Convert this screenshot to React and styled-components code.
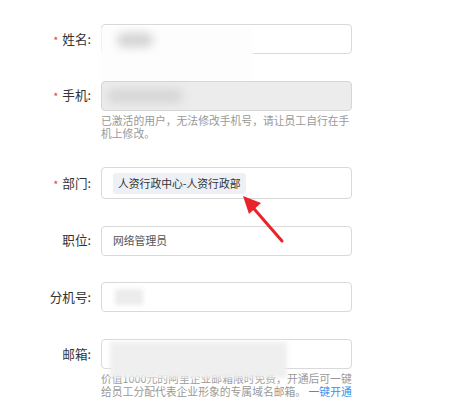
import React from "react";
import styled, { createGlobalStyle } from "styled-components";

const Global = createGlobalStyle`
  html, body { margin: 0; padding: 0; background: #fff; }
  body { font-family: "Noto Sans CJK SC", "Microsoft YaHei", sans-serif; }
`;

const Page = styled.div`
  position: relative;
  width: 472px;
  height: 412px;
  overflow: hidden;
  padding-top: 24px;
  box-sizing: border-box;
  display: flex;
  flex-direction: column;
  gap: 26.6px;
`;

const Row = styled.div`
  display: grid;
  grid-template-columns: 91px 251px;
  column-gap: 10px;
  align-items: start;
`;

const Label = styled.div`
  height: ${(p) => p.$h || 30}px;
  display: flex;
  align-items: center;
  justify-content: flex-end;
  font-size: 12.6px;
  color: #333;
  line-height: 1;
  white-space: nowrap;
`;

const Star = styled.span`
  color: #f04134;
  font-size: 11px;
  margin-right: 4px;
  position: relative;
  top: 1px;
`;

const Field = styled.div`
  position: relative;
  display: flex;
  flex-direction: column;
`;

const Box = styled.div`
  box-sizing: border-box;
  height: ${(p) => p.$h || 30}px;
  border: 1px solid ${(p) => (p.$disabled ? "#d6d6d6" : "#d9d9d9")};
  border-radius: 4px;
  background: ${(p) => (p.$disabled ? "#ececec" : "#fff")};
  display: flex;
  align-items: center;
  padding: 0 11px;
  font-size: 10.8px;
  color: #555;
  line-height: 1;
`;

const Tag = styled.span`
  display: inline-flex;
  align-items: center;
  height: 21px;
  padding: 0 5px;
  border-radius: 3px;
  background: #edf0f5;
  color: #333;
  font-size: 10.8px;
  line-height: 1;
`;

const Hint = styled.div`
  margin-top: 3px;
  font-size: 10.8px;
  line-height: 13.5px;
  color: #999;
`;

const Link = styled.span`
  color: #3d8fe8;
`;

const Mask = styled.div`
  position: absolute;
  left: ${(p) => p.$x}px;
  top: ${(p) => p.$y}px;
  width: ${(p) => p.$w}px;
  height: ${(p) => p.$hh}px;
  background: ${(p) => p.$bg};
  filter: blur(${(p) => p.$blur || 0}px);
  border-radius: ${(p) => p.$r || 0}px;
`;

const ArrowSvg = styled.svg`
  position: absolute;
  left: 230px;
  top: 185px;
  overflow: visible;
`;

export default function App() {
  return (
    <>
      <Global />
      <Page>
        <Row>
          <Label><Star>*</Star>姓名:</Label>
          <Field>
            <Box />
            <Mask $x={0} $y={4} $w={152} $hh={54} $bg="#fdfdfd" $blur={1} />
            <Mask $x={16} $y={9} $w={36} $hh={14} $bg="#d2d2d2" $blur={5} $r={8} />
          </Field>
        </Row>
        <Row>
          <Label><Star>*</Star>手机:</Label>
          <Field>
            <Box $disabled />
            <Mask $x={6} $y={8} $w={76} $hh={14} $bg="#d6d6d6" $blur={5} $r={8} />
            <Hint>已激活的用户，无法修改手机号，请让员工自行在手机上修改。</Hint>
          </Field>
        </Row>
        <Row>
          <Label $h={32}><Star>*</Star>部门:</Label>
          <Field>
            <Box $h={32}>
              <Tag>人资行政中心-人资行政部</Tag>
            </Box>
          </Field>
        </Row>
        <Row>
          <Label>职位:</Label>
          <Field>
            <Box>网络管理员</Box>
          </Field>
        </Row>
        <Row>
          <Label>分机号:</Label>
          <Field>
            <Box />
            <Mask $x={14} $y={7} $w={28} $hh={16} $bg="#ececec" $blur={2} />
          </Field>
        </Row>
        <Row>
          <Label>邮箱:</Label>
          <Field>
            <Box />
            <Mask $x={9} $y={3} $w={177} $hh={36} $bg="#efefef" $blur={2} />
            <Hint>
              价值1000元的阿里企业邮箱限时免费，开通后可一键给员工分配代表企业形象的专属域名邮箱。<Link> 一键开通</Link>
            </Hint>
          </Field>
        </Row>
        <ArrowSvg width="60" height="60" viewBox="0 0 60 60">
          <line x1="52" y1="56" x2="19" y2="18" stroke="#e8242a" strokeWidth="3" strokeLinecap="round" />
          <polygon points="13,11 31,18 19,29" fill="#e8242a" />
        </ArrowSvg>
      </Page>
    </>
  );
}
